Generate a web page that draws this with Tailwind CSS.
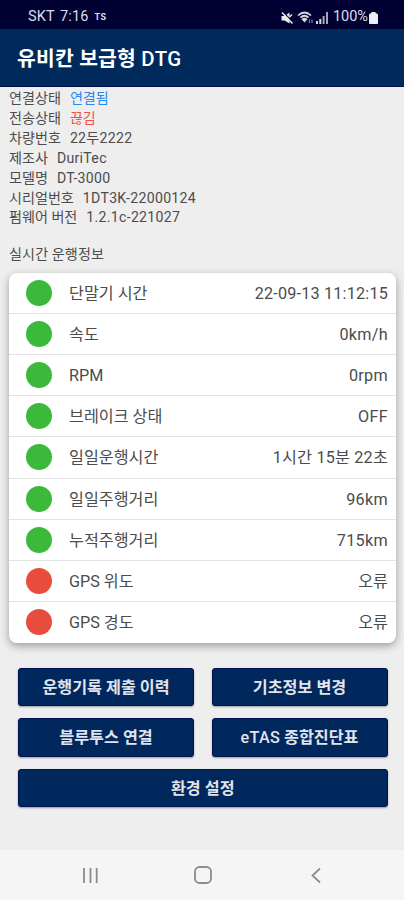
<!DOCTYPE html>
<html lang="ko">
<head>
<meta charset="utf-8">
<title>유비칸 보급형 DTG</title>
<script src="https://cdn.jsdelivr.net/npm/@tailwindcss/browser@4"></script>
</head>
<body class="w-[404px] h-[900px] overflow-hidden flex flex-col bg-[#eeeeee] text-[#4c4c4c] font-[Roboto,'Noto_Sans_CJK_KR',sans-serif]">
<header class="shrink-0 text-white">
  <div class="h-[29px] bg-[#000033] flex items-center pl-[28px] pr-[26px] pt-[6px] text-[#dedee6]">
    <span class="text-[14.5px] leading-none whitespace-pre tracking-[0.1px] [word-spacing:2px]">SKT 7:16</span>
    <span class="ml-[6px] text-[9px] leading-none font-bold tracking-[0.5px]">TS</span>
    <svg class="ml-auto" width="12" height="12" viewBox="0 0 12 12"><path d="M0.500 4h3L8.500 0.500v11L3.500 8.500h-3z" fill="#e8e8ee"/><path d="M2 0l10 10" stroke="#000033" stroke-width="1.200"/><path d="M1 0.500l10.500 11M8.500 5l2.500-2.500" stroke="#e8e8ee" stroke-width="1.500"/></svg>
    <svg class="ml-[4px]" width="17" height="13" viewBox="0 0 17 13" fill="none" stroke="#d8d8e0"><path d="M1 4.500Q7.500-1.500 14 4.500M3.500 6.500Q7.500 3 11.500 6.500" stroke-width="1.700"/><path d="M4.500 8.200Q7.500 5.500 10.500 8.200L7.500 11.500z" fill="#d8d8e0" stroke="none"/><path d="M12.500 8.500v3.500M15 8.500v3.500" stroke="#8080a0" stroke-width="1.200"/></svg>
    <svg class="ml-[2px]" width="12" height="12" viewBox="0 0 12 12" fill="#d8d8e0"><path d="M0 9h2v3H0zM3.300 7h2v5h-2z"/><path d="M6.600 4h2v8h-2zM10 0h2v12h-2z" fill="#a5a5b8"/></svg>
    <span class="ml-[5px] text-[14.5px] leading-none">100%</span>
    <svg class="ml-[1px]" width="9" height="12" viewBox="0 0 9 12" fill="#eeeef2"><path d="M2.500 0h4v1.200H7.500L9 2.500V11a1 1 0 0 1-1 1H1a1 1 0 0 1-1-1V2.500L1.500 1.200h1z"/></svg>
  </div>
  <div class="h-[58px] bg-[#002a5c] border-b border-[#00104a] flex items-center pl-[17px]">
    <h1 class="text-[20.4px] leading-none font-bold pt-[3px] tracking-[0.2px]">유비칸 보급형 <span class="font-medium tracking-[0.5px]">DTG</span></h1>
  </div>
</header>
<main class="flex-1 flex flex-col">
  <section class="pl-[9px] pt-[2px] text-[14.100px] leading-[19.9px] h-[178px]">
    <p class="flex gap-[9px]"><span>연결상태</span><span class="text-[#2489f5]">연결됨</span></p>
    <p class="flex gap-[9px]"><span>전송상태</span><span class="text-[#f04e48]">끊김</span></p>
    <p class="flex gap-[9px]"><span>차량번호</span><span class="tracking-[0.3px]">22두2222</span></p>
    <p class="flex gap-[9px]"><span>제조사</span><span class="tracking-[0.3px]">DuriTec</span></p>
    <p class="flex gap-[9px]"><span>모델명</span><span class="tracking-[0.3px]">DT-3000</span></p>
    <p class="flex gap-[9px]"><span>시리얼번호</span><span class="tracking-[0.3px]">1DT3K-22000124</span></p>
    <p class="flex gap-[9px]"><span>펌웨어 버전</span><span class="tracking-[0.3px]">1.2.1c-221027</span></p>
    <h2 class="mt-[17px] tracking-[0.1px]">실시간 운행정보</h2>
  </section>
  <section class="mt-[8px] ml-[9px] w-[387px] h-[370px] rounded-[8px] bg-white shadow-[0_3px_8px_rgba(0,0,0,0.35)] grid grid-rows-9 text-[16.200px] leading-none divide-y divide-[#e4e4e4]">
    <div class="flex items-center pl-[17px] pr-[8px]"><i class="size-[26px] rounded-full bg-[#3bb93b]"></i><span class="ml-[17px] pt-[2px]">단말기 시간</span><span class="ml-auto pt-[2px] tracking-[0.2px]">22-09-13 11:12:15</span></div>
    <div class="flex items-center pl-[17px] pr-[8px]"><i class="size-[26px] rounded-full bg-[#3bb93b]"></i><span class="ml-[17px] pt-[2px]">속도</span><span class="ml-auto pt-[2px] tracking-[0.3px]">0km/h</span></div>
    <div class="flex items-center pl-[17px] pr-[8px]"><i class="size-[26px] rounded-full bg-[#3bb93b]"></i><span class="ml-[17px] pt-[2px]">RPM</span><span class="ml-auto pt-[2px] tracking-[0.3px]">0rpm</span></div>
    <div class="flex items-center pl-[17px] pr-[8px]"><i class="size-[26px] rounded-full bg-[#3bb93b]"></i><span class="ml-[17px] pt-[2px]">브레이크 상태</span><span class="ml-auto pt-[2px] tracking-[0.3px]">OFF</span></div>
    <div class="flex items-center pl-[17px] pr-[8px]"><i class="size-[26px] rounded-full bg-[#3bb93b]"></i><span class="ml-[17px] pt-[2px]">일일운행시간</span><span class="ml-auto pt-[2px] tracking-[0.2px]">1시간 15분 22초</span></div>
    <div class="flex items-center pl-[17px] pr-[8px]"><i class="size-[26px] rounded-full bg-[#3bb93b]"></i><span class="ml-[17px] pt-[2px]">일일주행거리</span><span class="ml-auto pt-[2px] tracking-[0.3px]">96km</span></div>
    <div class="flex items-center pl-[17px] pr-[8px]"><i class="size-[26px] rounded-full bg-[#3bb93b]"></i><span class="ml-[17px] pt-[2px]">누적주행거리</span><span class="ml-auto pt-[2px] tracking-[0.3px]">715km</span></div>
    <div class="flex items-center pl-[17px] pr-[8px]"><i class="size-[26px] rounded-full bg-[#e84c3d]"></i><span class="ml-[17px] pt-[2px]">GPS 위도</span><span class="ml-auto pt-[2px]">오류</span></div>
    <div class="flex items-center pl-[17px] pr-[8px]"><i class="size-[26px] rounded-full bg-[#e84c3d]"></i><span class="ml-[17px] pt-[2px]">GPS 경도</span><span class="ml-auto pt-[2px]">오류</span></div>
  </section>
  <section class="mt-[24.5px] ml-[18px] w-[369.500px] grid grid-cols-2 gap-x-[17.5px] gap-y-[12px] text-[16.200px] leading-none font-bold text-[#e0e4ec]">
    <button class="h-[38.5px] pt-[2px] rounded-[3px] bg-[#00285c] border border-[#001454] shadow-[0_1px_2px_rgba(0,0,0,0.35)]">운행기록 제출 이력</button>
    <button class="h-[38.5px] pt-[2px] rounded-[3px] bg-[#00285c] border border-[#001454] shadow-[0_1px_2px_rgba(0,0,0,0.35)]">기초정보 변경</button>
    <button class="h-[38.5px] pt-[2px] rounded-[3px] bg-[#00285c] border border-[#001454] shadow-[0_1px_2px_rgba(0,0,0,0.35)]">블루투스 연결</button>
    <button class="h-[38.5px] pt-[2px] rounded-[3px] bg-[#00285c] border border-[#001454] shadow-[0_1px_2px_rgba(0,0,0,0.35)]"><span class="font-medium tracking-[0.3px]">eTAS</span> 종합진단표</button>
    <button class="col-span-2 h-[38.5px] pt-[2px] rounded-[3px] bg-[#00285c] border border-[#001454] shadow-[0_1px_2px_rgba(0,0,0,0.35)]">환경 설정</button>
  </section>
</main>
<nav class="h-[50px] shrink-0 bg-[#f5f5f5] flex items-center pl-[82px]">
  <svg width="17" height="17" viewBox="0 0 17 17" stroke="#8c8c8c" stroke-width="1.800"><path d="M2 1v15M8.500 1v15M14.700 1v15"/></svg>
  <svg class="ml-[95px]" width="18" height="18" viewBox="0 0 18 18" fill="none" stroke="#8c8c8c" stroke-width="1.800"><rect x="1" y="1" width="16" height="16" rx="4.500"/></svg>
  <svg class="ml-[99px]" width="10" height="17" viewBox="0 0 10 17" fill="none" stroke="#8c8c8c" stroke-width="1.800"><path d="M9 1.500l-7.500 7 7.500 7"/></svg>
</nav>
</body>
</html>
